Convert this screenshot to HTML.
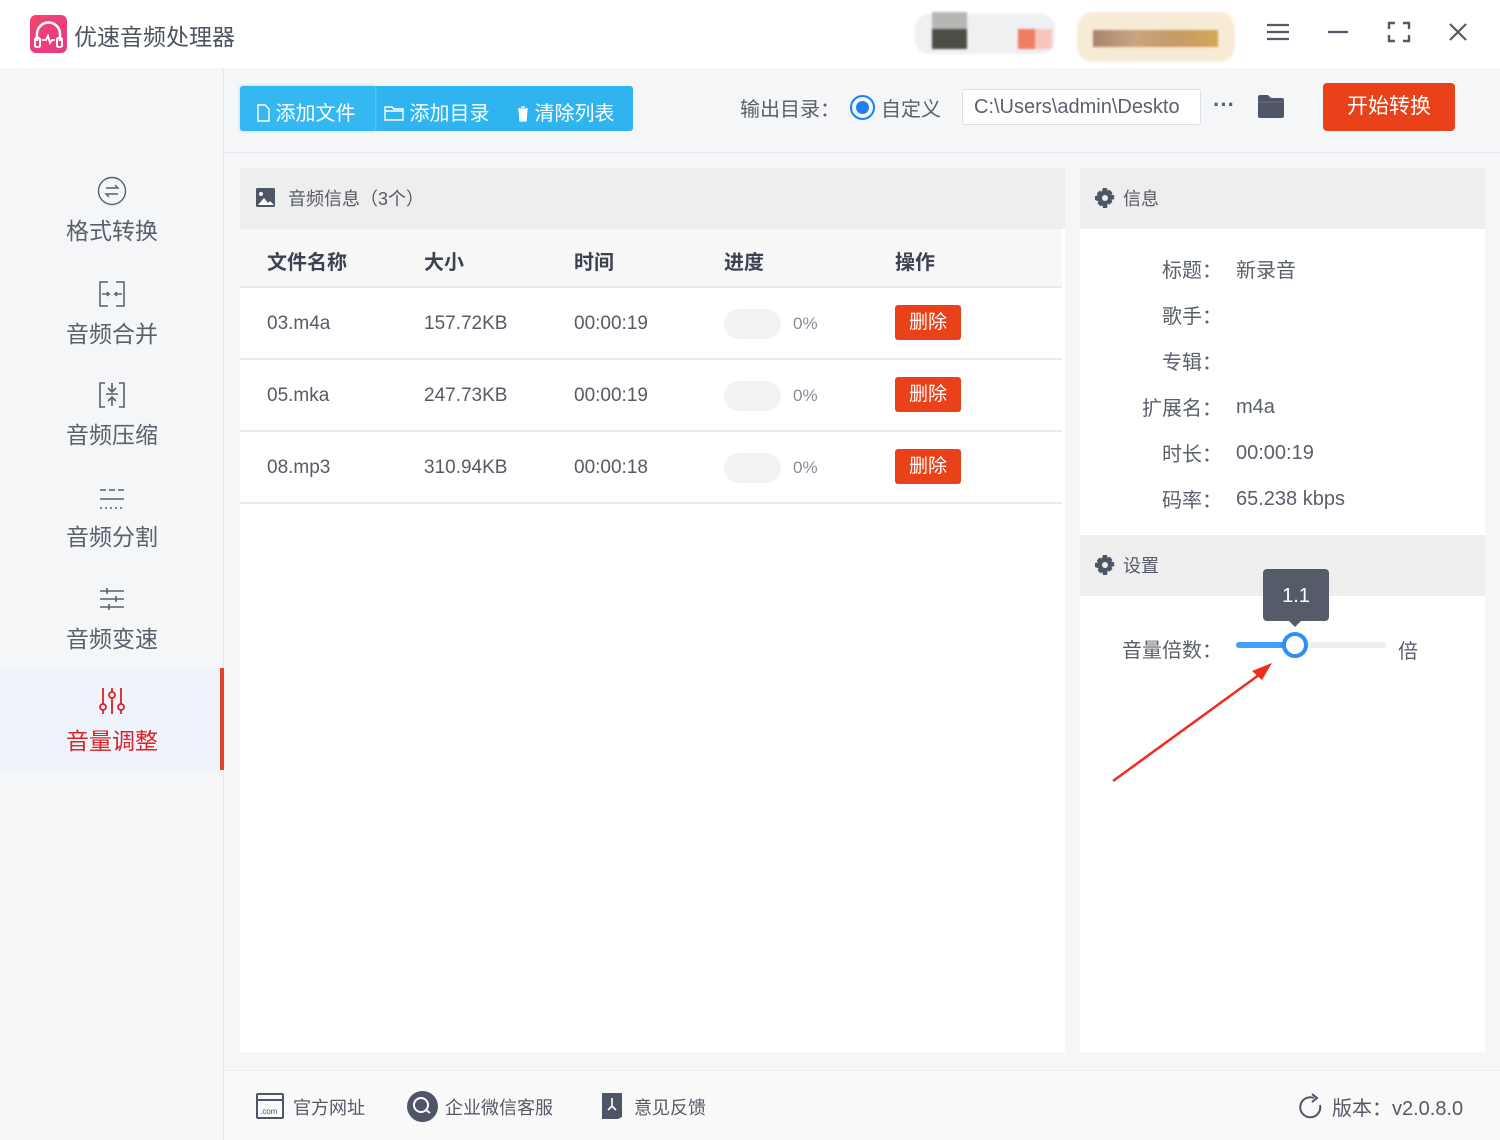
<!DOCTYPE html>
<html><head><meta charset="utf-8"><style>
*{margin:0;padding:0;box-sizing:border-box}
body{width:1500px;height:1140px;position:relative;background:#f5f6f8;font-family:"Liberation Sans","Noto Sans CJK SC",sans-serif;color:#555a66;overflow:hidden}
.a{position:absolute}
.nav{position:absolute;left:0;width:224px;text-align:center;font-size:23px;color:#5a5f6c}
.nav svg{display:block;margin:0 auto 6px}
.th{position:absolute;top:246px;font-size:20px;font-weight:bold;color:#3d4250}
.td{position:absolute;font-size:19px;color:#555a66}
.del{position:absolute;left:895px;width:66px;height:35px;background:#e9421b;color:#fff;font-size:19px;text-align:center;line-height:35px;border-radius:3px}
.pb{position:absolute;left:724px;width:57px;height:30px;border-radius:15px;background:#f2f2f3}
.pc{position:absolute;left:793px;font-size:17px;color:#8a8e98}
.lab{position:absolute;right:278px;font-size:20px;color:#5a5f6c;text-align:right}
.val{position:absolute;left:1236px;font-size:20px;color:#5a5f6c}
</style></head><body>
<div class="a" style="left:0;top:0;width:1500px;height:68px;background:#fff"></div>
<div class="a" style="left:30px;top:15px;width:37px;height:38px;border-radius:6px;background:linear-gradient(135deg,#f0466e,#e8388a)">
<svg width="37" height="38" viewBox="0 0 37 38"><path d="M7 26V19a11.5 11.5 0 0 1 23 0v7" fill="none" stroke="#fff" stroke-width="2.5"/><rect x="5" y="23" width="5" height="9" rx="1.5" fill="none" stroke="#fff" stroke-width="2"/><rect x="27" y="23" width="5" height="9" rx="1.5" fill="none" stroke="#fff" stroke-width="2"/><path d="M12 25h4l2-4 2 7 2-3h3" fill="none" stroke="#fff" stroke-width="1.8"/></svg></div>
<div class="a" style="left:74px;top:18px;font-size:23px;color:#4e5360">优速音频处理器</div>
<div class="a" style="left:915px;top:4px;width:145px;height:60px;filter:blur(1px)">
<div class="a" style="left:0;top:10px;width:140px;height:40px;background:#eef0f2;border-radius:14px"></div>
<div class="a" style="left:17px;top:25px;width:35px;height:20px;background:#4b4e44"></div>
<div class="a" style="left:17px;top:8px;width:35px;height:17px;background:#b5b7b5"></div>
<div class="a" style="left:103px;top:25px;width:17px;height:20px;background:#f07c63"></div>
<div class="a" style="left:120px;top:25px;width:17px;height:20px;background:#f6c6bd"></div>
</div>
<div class="a" style="left:1077px;top:12px;width:158px;height:50px;background:#f8ebd6;border-radius:16px;filter:blur(1px)">
<div class="a" style="left:16px;top:18px;width:125px;height:17px;background:linear-gradient(90deg,#a98270,#c9a57e,#c59a64,#d5a75a)"></div>
</div>
<svg class="a" style="left:1266px;top:22px" width="24" height="20"><path d="M1 3h22M1 10h22M1 17h22" stroke="#555a66" stroke-width="2.2"/></svg>
<svg class="a" style="left:1327px;top:22px" width="22" height="20"><path d="M1 10h20" stroke="#555a66" stroke-width="2.2"/></svg>
<svg class="a" style="left:1387px;top:21px" width="24" height="22"><path d="M2 8V2h6M16 2h6v6M2 14v6h6M16 20h6v-6" fill="none" stroke="#555a66" stroke-width="2.4"/></svg>
<svg class="a" style="left:1448px;top:22px" width="20" height="20"><path d="M2 2l16 16M18 2L2 18" stroke="#555a66" stroke-width="2.2"/></svg>
<div class="a" style="left:223px;top:68px;width:1px;height:1072px;background:#e8e9ec"></div>
<div class="a" style="left:0;top:668px;width:220px;height:102px;background:#eff4fa"></div>
<div class="a" style="left:220px;top:668px;width:4px;height:102px;background:#e0442b"></div>
<div class="nav" style="top:176px"><svg width="30" height="30"><circle cx="15" cy="15" r="13.5" fill="none" stroke="#5a5f6c" stroke-width="1.4"/><path d="M9 12h12l-3-3M21 18H9l3 3" fill="none" stroke="#5a5f6c" stroke-width="1.4"/></svg>格式转换</div>
<div class="nav" style="top:279px"><svg width="30" height="30"><path d="M11 3H3v24h8M19 3h8v24h-8M5 15h7l-2-2M12 15l-2 2M25 15h-7l2-2M18 15l2 2" fill="none" stroke="#5a5f6c" stroke-width="1.5"/></svg>音频合并</div>
<div class="nav" style="top:380px"><svg width="30" height="30"><path d="M8 3H3v24h5M22 3h5v24h-5M15 3v8M11 8l4 4 4-4M9 14h12M15 26v-8M11 21l4-4 4 4" fill="none" stroke="#5a5f6c" stroke-width="1.6"/></svg>音频压缩</div>
<div class="nav" style="top:482px"><svg width="30" height="30"><path d="M3 8h6M12 8h6M21 8h6M3 17h24" stroke="#5a5f6c" stroke-width="1.6"/><path d="M3 26h24" stroke="#5a5f6c" stroke-width="1.6" stroke-dasharray="2 3"/></svg>音频分割</div>
<div class="nav" style="top:584px"><svg width="30" height="30"><path d="M3 7h24M3 15h24M3 23h24" stroke="#5a5f6c" stroke-width="1.6"/><path d="M10 4v6M19 12v6M12 20v6" stroke="#5a5f6c" stroke-width="1.6"/></svg>音频变速</div>
<div class="nav" style="top:686px;color:#d9222a"><svg width="30" height="30"><g fill="none" stroke="#d9222a" stroke-width="1.8"><path d="M6 2v16M6 24v4M15 2v4M15 12v16M24 2v16M24 24v4"/><circle cx="6" cy="21" r="3"/><circle cx="15" cy="9" r="3"/><circle cx="24" cy="21" r="3"/></g></svg>音量调整</div>
<div class="a" style="left:224px;top:152px;width:1276px;height:1px;background:#e8e9ec"></div>
<div class="a" style="left:240px;top:86px;width:393px;height:45px;background:#2fb4ef;border-radius:3px"></div>
<div class="a" style="left:240px;top:86px;width:135px;height:45px;background:#35b8f2;border-radius:3px 0 0 3px;box-shadow:0 0 3px #9ad8f5"></div>
<div class="a" style="left:256px;top:97px;font-size:20px;color:#fff;white-space:nowrap">
<svg width="14" height="18" style="vertical-align:-2px"><path d="M2 1h7l4 4v12H2z" fill="none" stroke="#fff" stroke-width="1.4"/></svg> 添加文件</div>
<div class="a" style="left:384px;top:97px;font-size:20px;color:#fff;white-space:nowrap">
<svg width="20" height="18" style="vertical-align:-2px"><path d="M1 3h7l2 2h9v11H1zM1 7h18" fill="none" stroke="#fff" stroke-width="1.4"/></svg> 添加目录</div>
<div class="a" style="left:517px;top:97px;font-size:20px;color:#fff;white-space:nowrap">
<svg width="12" height="18" style="vertical-align:-2px"><path d="M1 5h10M4 3h4M2 5l1 12h6l1-12" fill="#fff" stroke="#fff" stroke-width="1.2"/></svg> 清除列表</div>
<div class="a" style="left:740px;top:93px;font-size:20px;color:#5a5f6c">输出目录：</div>
<div class="a" style="left:850px;top:95px;width:25px;height:25px;border-radius:50%;border:2px solid #1e7ff0"><div style="margin:4px;width:13px;height:13px;border-radius:50%;background:#1e7ff0"></div></div>
<div class="a" style="left:881px;top:93px;font-size:20px;color:#5a5f6c">自定义</div>
<div class="a" style="left:962px;top:89px;width:239px;height:36px;background:#fff;border:1px solid #dcdfe4;border-radius:3px;font-size:20px;color:#5a5f6c;padding:6px 0 0 11px;white-space:nowrap;overflow:hidden">C:\Users\admin\Deskto</div>
<div class="a" style="left:1213px;top:92px;font-size:22px;font-weight:bold;color:#5a5f6c;letter-spacing:0px">···</div>
<svg class="a" style="left:1257px;top:94px" width="28" height="25"><path d="M1 3q0-2 2-2h8l3 3h11q2 0 2 2v16q0 2-2 2H3q-2 0-2-2z" fill="#4d5567"/><path d="M1 8h26" stroke="#6a7285" stroke-width="1"/></svg>
<div class="a" style="left:1323px;top:83px;width:132px;height:48px;background:#e9421b;border-radius:4px;color:#fff;font-size:21px;text-align:center;line-height:48px">开始转换</div>
<div class="a" style="left:240px;top:168px;width:825px;height:884px;background:#fff"></div>
<div class="a" style="left:240px;top:168px;width:825px;height:61px;background:#eeeeef"></div>
<svg class="a" style="left:256px;top:188px" width="19" height="19"><rect x="0" y="0" width="19" height="19" rx="1.5" fill="#4d5567"/><circle cx="5" cy="6" r="2" fill="#fff"/><path d="M2 17l6-7 4 5 2-2 4 4" fill="#fff"/></svg>
<div class="a" style="left:288px;top:185px;font-size:18px;color:#555a66">音频信息（3个）</div>
<div class="a" style="left:240px;top:229px;width:822px;height:58px;background:#f7f7f8"></div>
<div class="th" style="left:267px">文件名称</div><div class="th" style="left:424px">大小</div><div class="th" style="left:574px">时间</div><div class="th" style="left:724px">进度</div><div class="th" style="left:895px">操作</div>
<div class="a" style="left:240px;top:286px;width:822px;height:2px;background:#e9eaec"></div>
<div class="a" style="left:240px;top:358px;width:822px;height:2px;background:#e9eaec"></div>
<div class="a" style="left:240px;top:430px;width:822px;height:2px;background:#e9eaec"></div>
<div class="a" style="left:240px;top:502px;width:822px;height:2px;background:#e9eaec"></div>
<div class="td" style="left:267px;top:313px">03.m4a</div><div class="td" style="left:424px;top:313px">157.72KB</div><div class="td" style="left:574px;top:313px">00:00:19</div>
<div class="pb" style="top:309px"></div><div class="pc" style="top:314px">0%</div><div class="del" style="top:305px">删除</div>
<div class="td" style="left:267px;top:385px">05.mka</div><div class="td" style="left:424px;top:385px">247.73KB</div><div class="td" style="left:574px;top:385px">00:00:19</div>
<div class="pb" style="top:381px"></div><div class="pc" style="top:386px">0%</div><div class="del" style="top:377px">删除</div>
<div class="td" style="left:267px;top:457px">08.mp3</div><div class="td" style="left:424px;top:457px">310.94KB</div><div class="td" style="left:574px;top:457px">00:00:18</div>
<div class="pb" style="top:453px"></div><div class="pc" style="top:458px">0%</div><div class="del" style="top:449px">删除</div>
<div class="a" style="left:1080px;top:168px;width:405px;height:884px;background:#fff"></div>
<div class="a" style="left:1080px;top:168px;width:405px;height:61px;background:#eeeeef"></div>
<div class="a" style="left:1080px;top:535px;width:405px;height:61px;background:#eeeeef"></div>
<svg class="a" style="left:1095px;top:188px" width="20" height="20" viewBox="0 0 20 20"><path d="M8 0h4l.6 2.8 2-1 2.8 2.8-1 2 2.8.6v4l-2.8.6 1 2-2.8 2.8-2-1L12 20H8l-.6-2.8-2 1-2.8-2.8 1-2L0 12V8l2.8-.6-1-2 2.8-2.8 2 1z" fill="#4d5567"/><circle cx="10" cy="10" r="3" fill="#eeeeef"/></svg>
<div class="a" style="left:1123px;top:185px;font-size:18px;color:#555a66">信息</div>
<svg class="a" style="left:1095px;top:555px" width="20" height="20" viewBox="0 0 20 20"><path d="M8 0h4l.6 2.8 2-1 2.8 2.8-1 2 2.8.6v4l-2.8.6 1 2-2.8 2.8-2-1L12 20H8l-.6-2.8-2 1-2.8-2.8 1-2L0 12V8l2.8-.6-1-2 2.8-2.8 2 1z" fill="#4d5567"/><circle cx="10" cy="10" r="3" fill="#eeeeef"/></svg>
<div class="a" style="left:1123px;top:552px;font-size:18px;color:#555a66">设置</div>
<div class="lab" style="top:254px">标题：</div><div class="val" style="top:254px">新录音</div>
<div class="lab" style="top:300px">歌手：</div>
<div class="lab" style="top:346px">专辑：</div>
<div class="lab" style="top:392px">扩展名：</div><div class="val" style="top:396px">m4a</div>
<div class="lab" style="top:438px">时长：</div><div class="val" style="top:442px">00:00:19</div>
<div class="lab" style="top:484px">码率：</div><div class="val" style="top:488px">65.238 kbps</div>
<div class="lab" style="top:634px">音量倍数：</div>
<div class="a" style="left:1236px;top:642px;width:150px;height:6px;border-radius:3px;background:#eeeeef"></div>
<div class="a" style="left:1236px;top:642px;width:58px;height:6px;border-radius:3px;background:#409eff"></div>
<div class="a" style="left:1282px;top:632px;width:26px;height:26px;border-radius:50%;border:4px solid #2f8ef0;background:#fff"></div>
<div class="a" style="left:1263px;top:569px;width:66px;height:52px;background:#555b69;border-radius:4px;color:#fff;font-size:20px;text-align:center;line-height:54px">1.1</div>
<div class="a" style="left:1289px;top:621px;border:6px solid transparent;border-top-color:#555b69"></div>
<div class="a" style="left:1398px;top:635px;font-size:20px;color:#5a5f6c">倍</div>
<svg class="a" style="left:1105px;top:650px" width="180" height="140"><path d="M8 131L158 22" stroke="#f02c20" stroke-width="2.5"/><path d="M167 13l-20 8 10 9z" fill="#f02c20"/></svg>
<div class="a" style="left:224px;top:1070px;width:1276px;height:70px;background:#f9f9fa;border-top:1px solid #eceef0"></div>
<svg class="a" style="left:256px;top:1093px" width="28" height="26"><rect x="1" y="1" width="26" height="24" rx="1" fill="none" stroke="#4d5567" stroke-width="2"/><path d="M1 7h26" stroke="#4d5567" stroke-width="2"/><text x="4" y="21" font-size="8" fill="#4d5567" font-family="Liberation Sans">.com</text></svg>
<div class="a" style="left:293px;top:1094px;font-size:18px;color:#555a66">官方网址</div>
<svg class="a" style="left:407px;top:1091px" width="31" height="31"><circle cx="15.5" cy="15.5" r="15.5" fill="#4d5567"/><circle cx="14" cy="14" r="7" fill="none" stroke="#fff" stroke-width="2"/><path d="M19 19l4 3" stroke="#fff" stroke-width="2"/></svg>
<div class="a" style="left:445px;top:1094px;font-size:18px;color:#555a66">企业微信客服</div>
<svg class="a" style="left:601px;top:1092px" width="22" height="28"><path d="M1 1h20v24l-4 2H1z" fill="#4d5567"/><path d="M11 6v8M7 18l4-4 4 4" stroke="#fff" stroke-width="1.6" fill="none"/></svg>
<div class="a" style="left:634px;top:1094px;font-size:18px;color:#555a66">意见反馈</div>
<svg class="a" style="left:1299px;top:1093px" width="24" height="28"><path d="M15 5A10 10 0 1 0 21 12" fill="none" stroke="#4d5567" stroke-width="2"/><path d="M13 1l5 4-5 4" fill="none" stroke="#4d5567" stroke-width="2"/></svg>
<div class="a" style="left:1332px;top:1092px;font-size:20px;color:#555a66">版本：v2.0.8.0</div>
</body></html>
